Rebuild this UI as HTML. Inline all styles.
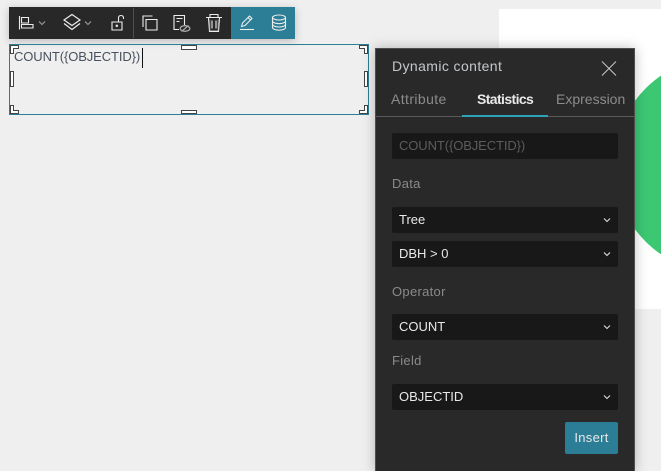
<!DOCTYPE html>
<html><head><meta charset="utf-8">
<style>
html,body{margin:0;padding:0;height:471px;overflow:hidden}
body{width:661px;background:#efefef;position:relative;font-family:"Liberation Sans",sans-serif}
.a{position:absolute}
.page{left:499px;top:9px;width:162px;height:300px;background:#fff;overflow:hidden}
.circle{left:115.4px;top:48.4px;width:215.2px;height:215.2px;border-radius:50%;background:#3cc873}
.tb{left:9px;top:7px;width:286px;height:32px;background:#282828;box-shadow:0 2px 8px rgba(0,0,0,.22)}
.tl{left:222px;top:0;width:64px;height:32px;background:#2b7e95}
.sep{top:1px;width:1px;height:30px;background:#4f4f4f}
svg{position:absolute;left:0;top:0;overflow:visible}
.sel{left:9px;top:44px;width:358px;height:69px;border:1px solid #2b7e95}
.h{position:absolute;box-sizing:border-box;background:#fff;border:1px solid #444}
.txt{left:14px;top:49px;font-size:13px;line-height:16px;color:#48525e;letter-spacing:-.1px;white-space:nowrap}
.caret{left:142px;top:48px;width:1px;height:20px;background:#111}
.panel{left:375px;top:48px;width:258px;height:423px;background:#292929;border:1px solid #4e4e4e;border-bottom:0;box-shadow:0 0 12px rgba(0,0,0,.25)}
.t{position:absolute;white-space:nowrap;line-height:16px}
.box{position:absolute;left:392px;width:226px;height:26px;background:#181818;border-radius:2px}
.box span{position:absolute;left:7px;top:5px;font-size:13px;line-height:16px;color:#e8e8e8;white-space:nowrap}
.box svg{left:0;top:0}
.lbl{font-size:13px;color:#8a8a8a;letter-spacing:.3px}
.btn{left:565px;top:422px;width:53px;height:32px;background:#2b7e95;border-radius:2px;color:#e8e8e8;font-size:13px;line-height:32px;text-align:center;letter-spacing:.3px}
</style></head><body>
<div class="a page"><div class="a circle"></div></div>

<div class="a tb">
 <div class="a tl"></div>
 <div class="a sep" style="left:124px"></div>
 <svg width="286" height="32" fill="none" stroke="#ececec" stroke-width="1.100">
  <!-- align -->
  <path d="M10.500 9v13.500M12.500 10.500h7v5.500h-7zM12.500 17.500h11.500v3.500h-11.500z"/>
  <path d="M30 14.500l3 3 3-3" stroke="#8a8a8a" stroke-width="1.300"/>
  <!-- layers -->
  <path d="M63 7.500l8 5.500-8 5.500-8-5.500zM55 16.500l8 6 8-6" stroke-width="1.200"/>
  <path d="M76 14.500l3 3 3-3" stroke="#8a8a8a" stroke-width="1.300"/>
  <!-- lock -->
  <path d="M103 15h10v8h-10z"/>
  <path d="M109.500 14.500v-3.500q0-2.500 2.500-2.500t2.500 2.500v1"/>
  <rect x="106.700" y="17.700" width="2.200" height="2.200" fill="#ececec" stroke="none"/>
  <!-- copy -->
  <path d="M143.500 9h-9.500v11"/><path d="M137 12.500h11v10.500h-11z"/>
  <!-- save as -->
  <path d="M175.500 18v-9.500h-10.500v14h5"/>
  <path d="M167.500 11.500h6M167.500 14.500h3"/>
  <ellipse cx="176" cy="21.500" rx="4.800" ry="2.800" stroke="#a8a8a8" stroke-width="1.300"/>
  <path d="M172.500 24.500l7-6" stroke="#a8a8a8" stroke-width="1.200"/>
  <!-- trash -->
  <path d="M197 10.500h16M201 10v-2.500h8v2.500M199.500 11l1 13.500h9l1-13.500M203 13.500v8M207 13.500v8"/>
  <path d="M201 12.500v11h8v-11" stroke="#8a8a8a" stroke-width=".7"/>
  <!-- pencil -->
  <path d="M232.500 19.500l1-3.500 7-7 2.500 2.500-7 7zM239 10.500l2.500 2.500"/>
  <path d="M231 22.500h14"/>
  <!-- database -->
  <ellipse cx="270" cy="10.500" rx="6.500" ry="2.500"/>
  <path d="M263.500 10.500v10c0 1.500 3 2.700 6.500 2.700s6.500-1.200 6.500-2.700v-10M263.500 14c0 1.500 3 2.700 6.500 2.700s6.500-1.200 6.500-2.700M263.500 17.300c0 1.500 3 2.700 6.500 2.700s6.500-1.200 6.500-2.700"/>
 </svg>
</div>

<div class="a sel"></div>
<div class="a txt">COUNT({OBJECTID})</div>
<div class="a caret"></div>
<svg width="661" height="471" fill="#fff" stroke="#444" stroke-width="1">
 <path d="M10.500 45.500h8v3h-5v5h-3z"/>
 <path d="M10.500 105.500v8h8v-3h-5v-5z"/>
 <path d="M367.500 45.500h-8v3h5v5h3z"/>
 <path d="M367.500 105.500v8h-8v-3h5v-5z"/>
</svg>
<div class="h" style="left:181px;top:45px;width:16px;height:5px"></div>
<div class="h" style="left:181px;top:110px;width:16px;height:4px"></div>
<div class="h" style="left:10px;top:71px;width:4px;height:16px"></div>
<div class="h" style="left:364px;top:71px;width:4px;height:16px"></div>

<div class="a panel"></div>
<div class="t" style="left:392px;top:58px;font-size:14px;color:#c4c8cc;letter-spacing:.4px">Dynamic content</div>
<svg width="661" height="471" fill="none" stroke="#c8c8c8" stroke-width="1"><path d="M602 61.500l14 14M616 61.500l-14 14"/></svg>
<div class="t" style="left:391px;top:91px;font-size:14px;color:#8c8c8c;letter-spacing:.4px">Attribute</div>
<div class="t" style="left:477px;top:91px;font-size:14px;color:#e8e8e8;font-weight:bold;letter-spacing:-.6px">Statistics</div>
<div class="t" style="left:556px;top:91px;font-size:14px;color:#8c8c8c">Expression</div>
<div class="a" style="left:376px;top:116px;width:258px;height:1px;background:#5a5a5a"></div>
<div class="a" style="left:462px;top:115px;width:86px;height:2px;background:#2ea3b8"></div>

<div class="box" style="top:133px"><span style="color:#5c5c5c;letter-spacing:-.1px">COUNT({OBJECTID})</span></div>
<div class="t lbl" style="left:392px;top:176px">Data</div>
<div class="box" style="top:207px"><span>Tree</span><svg width="226" height="26" fill="none" stroke="#ddd" stroke-width="1.100"><path d="M212 11.500l3 3 3-3"/></svg></div>
<div class="box" style="top:241px"><span>DBH &gt; 0</span><svg width="226" height="26" fill="none" stroke="#ddd" stroke-width="1.100"><path d="M212 11.500l3 3 3-3"/></svg></div>
<div class="t lbl" style="left:392px;top:284px">Operator</div>
<div class="box" style="top:314px"><span>COUNT</span><svg width="226" height="26" fill="none" stroke="#ddd" stroke-width="1.100"><path d="M212 11.500l3 3 3-3"/></svg></div>
<div class="t lbl" style="left:392px;top:353px">Field</div>
<div class="box" style="top:384px"><span>OBJECTID</span><svg width="226" height="26" fill="none" stroke="#ddd" stroke-width="1.100"><path d="M212 11.500l3 3 3-3"/></svg></div>
<div class="a btn">Insert</div>
</body></html>
